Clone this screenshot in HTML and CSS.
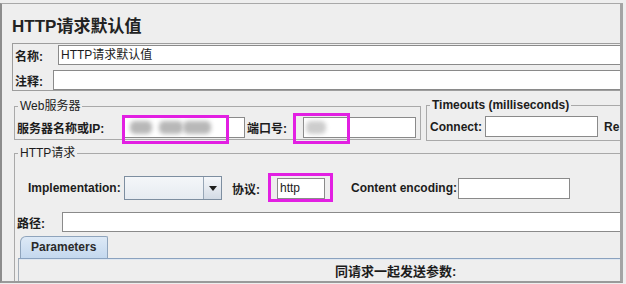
FILE: index.html
```html
<!DOCTYPE html>
<html lang="zh">

<head>
  <meta charset="UTF-8" />
  <title>HTTP请求默认值</title>
  <link rel="stylesheet" href="styles.css">
</head>

<body>
  <div class="window">
    <h1 class="title">HTTP请求默认值</h1>

    <div class="name-box">
      <div class="row">
        <label class="lbl lbl-name">名称:</label>
        <div class="field field-wide">HTTP请求默认值</div>
      </div>
      <div class="row row-comment">
        <label class="lbl lbl-comment">注释:</label>
        <div class="field field-wide"></div>
      </div>
    </div>

    <div class="server-row">
      <fieldset class="group group-web">
        <legend>Web服务器</legend>
        <div class="row">
          <label class="lbl lbl-host">服务器名称或IP:</label>
          <div class="field field-host">
            <span class="blur blur-1"></span>
            <span class="blur blur-2"></span>
            <span class="blur blur-3"></span>
            <span class="mark mark-host"></span>
          </div>
          <label class="lbl lbl-port">端口号:</label>
          <div class="field field-port">
            <span class="blur blur-port"></span>
            <span class="mark mark-port"></span>
          </div>
        </div>
      </fieldset>

      <fieldset class="group group-timeouts">
        <legend>Timeouts (milliseconds)</legend>
        <div class="row">
          <label class="lbl lbl-connect">Connect:</label>
          <div class="field field-connect"></div>
          <label class="lbl lbl-response">Re</label>
        </div>
      </fieldset>
    </div>

    <fieldset class="group group-http">
      <legend>HTTP请求</legend>

      <div class="row impl-row">
        <label class="lbl lbl-impl">Implementation:</label>
        <div class="combo">
          <div class="combo-value"></div>
          <div class="combo-btn"><span class="arrow"></span></div>
        </div>
        <label class="lbl lbl-proto">协议:</label>
        <div class="field field-proto">
          http
          <span class="mark mark-proto"></span>
        </div>
        <label class="lbl lbl-enc">Content encoding:</label>
        <div class="field field-enc"></div>
      </div>

      <div class="row path-row">
        <label class="lbl lbl-path">路径:</label>
        <div class="field field-wide"></div>
      </div>

      <div class="tabs">
        <div class="tab active">Parameters</div>
      </div>
      <div class="tab-panel">
        <div class="panel-title">同请求一起发送参数:</div>
      </div>
    </fieldset>
  </div>
</body>

</html>
```

FILE: styles.css
```css
* {
  box-sizing: border-box;
}

body {
  margin: 0;
  background-color: #eeeeee;
  font-family: 'Liberation Sans', 'Noto Sans CJK SC', sans-serif;
  font-size: 12px;
  color: #1c1c1c;
  overflow: hidden;
}

.window {
  margin-top: 3px;
  width: 623px;
  height: 280px;
  border-top: 1px solid #a8a8a8;
  border-left: 2px solid #8c8c8c;
  border-right: 3px solid #a4a4a4;
  border-bottom: 2px solid #9a9a9a;
  background-color: #eeeeee;
  overflow: hidden;
}

.title {
  margin: 0;
  padding: 13px 0 0 10px;
  height: 33px;
  font-size: 17px;
  line-height: 20px;
  font-weight: bold;
  color: #222;
}

.row {
  display: flex;
  align-items: center;
}

.lbl {
  font-weight: bold;
  white-space: nowrap;
  flex-shrink: 0;
}

.field {
  position: relative;
  flex-shrink: 0;
  height: 20px;
  padding-left: 2px;
  line-height: 18px;
  background-color: #ffffff;
  border: 1px solid #8a8a8a;
  white-space: nowrap;
}

.field-wide {
  flex: 1;
}

/* name / comment */
.name-box {
  margin: 6px 0 0 10px;
  width: 720px;
  height: 48px;
  padding: 1px 0 0 1px;
  border: 1px solid #9d9d9d;
}

.row-comment {
  margin-top: 5px;
}

.lbl-name {
  width: 44px;
  padding-left: 1px;
}

.lbl-comment {
  width: 39px;
  padding-left: 1px;
}

/* groups */
.group {
  margin: 0;
  padding: 0;
  min-width: 0;
  border: 1px solid #a9a9a9;
}

.group legend {
  margin-left: 3px;
  padding: 0 2px;
  font-size: 12px;
  line-height: 16px;
}

.server-row {
  display: flex;
  align-items: flex-start;
  gap: 5px;
  margin: 7px 0 0 12px;
  height: 47px;
}

.group-web {
  width: 407px;
  flex-shrink: 0;
}

.group-web .row {
  padding: 3px 0 1px 2px;
}

.group-web .field,
.group-timeouts .field {
  height: 21px;
  line-height: 19px;
}

.lbl-host {
  width: 107px;
}

.field-host {
  width: 121px;
}

.lbl-port {
  width: 56px;
  margin-left: 2px;
}

.field-port {
  width: 113px;
}

.group-timeouts {
  width: 300px;
  flex-shrink: 0;
  margin-top: -1px;
}

.group-timeouts legend {
  font-weight: bold;
}

.group-timeouts .row {
  padding: 3px 0 3px 3px;
}

.lbl-connect {
  width: 55px;
}

.field-connect {
  width: 113px;
}

.lbl-response {
  margin-left: 6px;
}

/* blurred host values */
.blur {
  position: absolute;
  top: 3px;
  height: 13px;
  background-color: #b8b8b8;
  border-radius: 5px;
  filter: blur(2px);
}

.blur-1 { left: 5px; width: 22px; }
.blur-2 { left: 34px; width: 24px; }
.blur-3 { left: 58px; width: 28px; }
.blur-port { left: 2px; width: 20px; background-color: #cdcdcd; }

/* annotation frames */
.mark {
  position: absolute;
  border: 3px solid #e21fe2;
}

.mark-host {
  left: -3px;
  top: -3px;
  width: 107px;
  height: 29px;
}

.mark-port {
  left: -11px;
  top: -5px;
  width: 57px;
  height: 31px;
}

.mark-proto {
  left: -10px;
  top: -6px;
  width: 65px;
  height: 29px;
}

/* http request */
.group-http {
  margin-left: 12px;
  width: 720px;
  height: 200px;
}

.impl-row {
  padding: 15px 0 0 13px;
}

.lbl-impl {
  width: 96px;
}

.combo {
  display: flex;
  width: 98px;
  height: 24px;
  border: 1px solid #7d8ea0;
  background: linear-gradient(#f4f6f9, #e6ebf1);
}

.combo-value {
  flex: 1;
}

.combo-btn {
  display: flex;
  align-items: center;
  justify-content: center;
  width: 18px;
  border-left: 1px solid #97a6b6;
  background: linear-gradient(#f5f7fa, #d3dbe5);
}

.arrow {
  width: 0;
  height: 0;
  border-left: 4px solid transparent;
  border-right: 4px solid transparent;
  border-top: 5px solid #1e1e1e;
}

.lbl-proto {
  width: 45px;
  margin-left: 10px;
}

.field-proto {
  width: 48px;
  height: 21px;
  line-height: 19px;
}

.lbl-enc {
  width: 107px;
  margin-left: 26px;
}

.field-enc {
  width: 112px;
  height: 21px;
}

.path-row {
  margin-top: 12px;
  padding-left: 2px;
}

.lbl-path {
  width: 45px;
}

.tabs {
  display: flex;
  margin: 4px 0 0 5px;
}

.tab {
  width: 88px;
  height: 22px;
  padding-left: 10px;
  line-height: 21px;
  font-weight: bold;
  color: #2a2a2a;
  border: 1px solid #8fa4bc;
  border-bottom: none;
  border-radius: 6px 2px 0 0;
  background: linear-gradient(#dde9f6, #c4d8ee);
}

.tab-panel {
  margin-left: 3px;
  height: 40px;
  border-top: 1px solid #8aa2bf;
  border-left: 1px solid #a3adb8;
  box-shadow: inset 0 1px 0 #dfe7f0;
}

.panel-title {
  padding: 5px 0 0 316px;
  font-size: 13px;
  line-height: 16px;
  font-weight: bold;
  white-space: nowrap;
}
```
